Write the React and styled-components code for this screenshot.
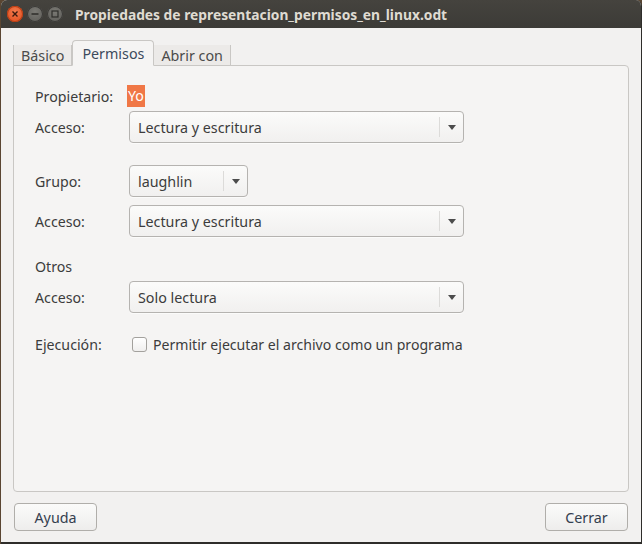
import styled, { createGlobalStyle } from "styled-components";

const GlobalStyle = createGlobalStyle`
  html, body {
    margin: 0;
    padding: 0;
    background: #5a4632;
  }
  body {
    font-family: "Noto Sans", "Open Sans", sans-serif;
  }
`;

const Window = styled.div`
  width: 640px;
  height: 542px;
  margin-left: 1px;
  background: #f2f1f0;
  border-right: 1px solid #2e2d2a;
  border-bottom: 2px solid #2e2d2a;
  border-radius: 6px 6px 0 0;
  display: flex;
  flex-direction: column;
  overflow: hidden;
  box-sizing: content-box;
`;

const TitleBar = styled.div`
  height: 28px;
  flex: none;
  background: linear-gradient(#45433e, #3c3b37);
  display: flex;
  align-items: center;
  padding-left: 6px;
  gap: 4px;
`;

const WinButton = styled.div`
  width: 16px;
  height: 16px;
  border-radius: 50%;
  display: flex;
  align-items: center;
  justify-content: center;
  background: ${(p) =>
    p.$close
      ? "radial-gradient(circle at 50% 35%, #f27a4d, #df4a1a)"
      : "radial-gradient(circle at 50% 35%, #7a7974, #5a5955)"};
  box-shadow: inset 0 0 0 1px ${(p) => (p.$close ? "#b83d13" : "#3a3936")};
`;

const Title = styled.div`
  margin-left: 8px;
  color: #dfdbd2;
  font-size: 13.8px;
  font-weight: 700;
`;

const Body = styled.div`
  flex: 1;
  display: flex;
  flex-direction: column;
  padding: 12px 12px 0 12px;
`;

const Tabs = styled.div`
  display: flex;
  align-items: flex-end;
  height: 26px;
  margin-bottom: -1px;
  position: relative;
  z-index: 1;
`;

const Tab = styled.div`
  height: ${(p) => (p.$active ? "26px" : "21px")};
  box-sizing: border-box;
  padding: 0 ${(p) => (p.$active ? "9px" : "7px")};
  padding-top: ${(p) => (p.$active ? "0" : "1px")};
  display: flex;
  align-items: center;
  font-size: 14.3px;
  color: ${(p) => (p.$active ? "#3d4a5c" : "#4a4a4a")};
  background: ${(p) => (p.$active ? "#f5f4f3" : "#eceae8")};
  border: 1px solid #c9c7c4;
  border-bottom: ${(p) => (p.$active ? "1px solid #f5f4f3" : "1px solid #c9c7c4")};
  border-left: ${(p) => (p.$first || p.$active ? "1px solid #c9c7c4" : "none")};
  border-top: ${(p) => (p.$active ? "1px solid #c9c7c4" : "none")};
  border-radius: ${(p) => (p.$active ? "4px 4px 0 0" : "0")};
`;

const Frame = styled.div`
  flex: 1;
  background: #f5f4f3;
  border: 1px solid #c9c7c4;
  border-radius: 0 4px 4px 4px;
  padding: 19px 0 0 21px;
  display: flex;
  flex-direction: column;
`;

const Row = styled.div`
  display: flex;
  align-items: center;
  margin-top: ${(p) => p.$mt || 0}px;
  min-height: 20px;
`;

const Label = styled.div`
  width: ${(p) => (p.$wide ? "auto" : "94px")};
  flex: none;
  font-size: 14.2px;
  color: #3c3c3c;
`;

const Highlight = styled.span`
  background: #f07746;
  color: #ffffff;
  font-size: 14.2px;
  padding: 1px 1px 2px;
  margin-left: -2px;
`;

const Combo = styled.div`
  width: ${(p) => p.$w}px;
  height: 32px;
  box-sizing: border-box;
  border: 1px solid #b5b3b0;
  border-radius: 4px;
  background: linear-gradient(#fbfbfa, #f1f0ef);
  box-shadow: 0 1px 0 rgba(255, 255, 255, 0.6);
  display: flex;
  align-items: center;
  font-size: 14.3px;
  color: #3c3c3c;
`;

const ComboText = styled.div`
  flex: 1;
  padding-left: 8px;
`;

const ComboSep = styled.div`
  width: 1px;
  align-self: stretch;
  margin: 5px 0;
  background: #dcdbd9;
`;

const ComboArrow = styled.div`
  width: 23px;
  display: flex;
  justify-content: center;
  &::after {
    content: "";
    border-left: 4px solid transparent;
    border-right: 4px solid transparent;
    border-top: 5px solid #4c4c4c;
  }
`;

const Check = styled.div`
  width: 15px;
  height: 15px;
  box-sizing: border-box;
  margin-left: 3px;
  border: 1px solid #a3a19d;
  border-radius: 3px;
  background: linear-gradient(#ffffff, #f0efee);
`;

const CheckLabel = styled.div`
  margin-left: 6px;
  font-size: 14.1px;
  color: #3c3c3c;
`;

const Footer = styled.div`
  height: 50px;
  flex: none;
  display: flex;
  align-items: center;
  justify-content: space-between;
  padding: 0 1px 0 1px;
`;

const Button = styled.div`
  width: 83px;
  height: 28px;
  box-sizing: border-box;
  border: 1px solid #b0aeaa;
  border-radius: 4px;
  background: linear-gradient(#fbfbfa, #eeedec);
  display: flex;
  align-items: center;
  justify-content: center;
  font-size: 14.3px;
  color: #34404f;
`;

function Select({ width, value }) {
  return (
    <Combo $w={width}>
      <ComboText>{value}</ComboText>
      <ComboSep />
      <ComboArrow />
    </Combo>
  );
}

export default function App() {
  return (
    <>
      <GlobalStyle />
      <Window>
        <TitleBar>
          <WinButton $close>
            <svg width="8" height="8" viewBox="0 0 8 8">
              <path d="M1.5 1.5L6.5 6.5M6.5 1.5L1.5 6.5" stroke="#3a1a0e" strokeWidth="1.4" />
            </svg>
          </WinButton>
          <WinButton>
            <svg width="8" height="8" viewBox="0 0 8 8">
              <path d="M0.5 4H7.5" stroke="#2e2d2a" strokeWidth="1.4" />
            </svg>
          </WinButton>
          <WinButton>
            <svg width="8" height="8" viewBox="0 0 8 8">
              <rect x="1" y="1" width="6" height="6" fill="none" stroke="#2e2d2a" strokeWidth="1.2" />
            </svg>
          </WinButton>
          <Title>Propiedades de representacion_permisos_en_linux.odt</Title>
        </TitleBar>
        <Body>
          <Tabs>
            <Tab $first>Básico</Tab>
            <Tab $active>Permisos</Tab>
            <Tab>Abrir con</Tab>
          </Tabs>
          <Frame>
            <Row>
              <Label>Propietario:</Label>
              <Highlight>Yo</Highlight>
            </Row>
            <Row $mt={4}>
              <Label>Acceso:</Label>
              <Select width={335} value="Lectura y escritura" />
            </Row>
            <Row $mt={22}>
              <Label>Grupo:</Label>
              <Select width={119} value="laughlin" />
            </Row>
            <Row $mt={8}>
              <Label>Acceso:</Label>
              <Select width={335} value="Lectura y escritura" />
            </Row>
            <Row $mt={19}>
              <Label $wide>Otros</Label>
            </Row>
            <Row $mt={5}>
              <Label>Acceso:</Label>
              <Select width={335} value="Solo lectura" />
            </Row>
            <Row $mt={21}>
              <Label>Ejecución:</Label>
              <Check />
              <CheckLabel>Permitir ejecutar el archivo como un programa</CheckLabel>
            </Row>
          </Frame>
          <Footer>
            <Button>Ayuda</Button>
            <Button>Cerrar</Button>
          </Footer>
        </Body>
      </Window>
    </>
  );
}
